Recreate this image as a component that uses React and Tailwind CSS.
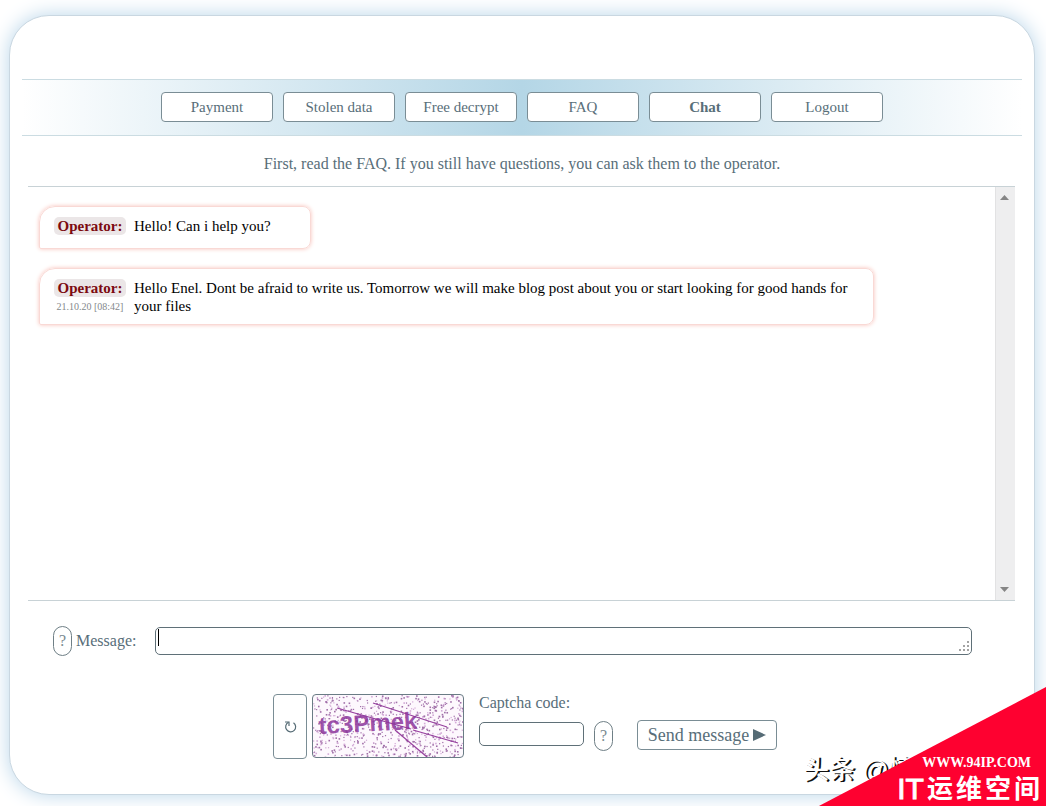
import React, { useState } from 'react';

const navItems = ['Payment', 'Stolen data', 'Free decrypt', 'FAQ', 'Chat', 'Logout'];

const messages = [
  { author: 'Operator', time: '', text: 'Hello! Can i help you?' },
  {
    author: 'Operator',
    time: '21.10.20 [08:42]',
    text: 'Hello Enel. Dont be afraid to write us. Tomorrow we will make blog post about you or start looking for good hands for your files',
  },
];

// Small seeded generator so the captcha noise stays the same between renders
const makeNoise = (count) => {
  let seed = 7;
  const next = () => {
    seed = (seed * 16807) % 2147483647;
    return seed / 2147483647;
  };
  return Array.from({ length: count }, () => ({
    x: next() * 150,
    y: next() * 62,
    size: next() > 0.6 ? 1.6 : 1.2,
    dark: next() > 0.35,
  }));
};

const noise = makeNoise(750);

const HelpButton = ({ label }) => (
  <button
    type="button"
    aria-label={label}
    className="w-[19px] h-[30px] shrink-0 rounded-full border border-[#6f7f86] text-base leading-none text-[#7b8a91] flex items-center justify-center cursor-pointer"
  >
    ?
  </button>
);

const NavBar = ({ active, onSelect }) => (
  <nav className="mx-3 h-[57px] pb-px border-y border-[#cbdce2] bg-linear-to-r from-white via-[#b4d6e6] to-white flex items-center justify-center gap-[10px]">
    {navItems.map((item) => (
      <button
        key={item}
        type="button"
        onClick={() => onSelect(item)}
        className={`w-28 h-[30px] rounded-[4px] border border-[#7a8d95] bg-white text-[15px] cursor-pointer ${
          active === item ? 'font-bold' : ''
        }`}
      >
        {item}
      </button>
    ))}
  </nav>
);

const Message = ({ author, time, text }) => (
  <article className="w-fit min-w-[272px] max-w-[835px] min-h-[43px] rounded-tl-[16px] rounded-r-[8px] rounded-bl-[2px] border border-[#f9d9d5] shadow-[0_0_4px_#f8c2ba] pl-[14px] pr-6 pt-[10px] pb-[9px] flex gap-2 text-[15px] leading-[18px] text-black">
    <div className="shrink-0 w-[72px] flex flex-col items-center">
      <strong className="w-full rounded-[5px] bg-[#ebe6e7] text-center text-[#7c0a10]">{author}:</strong>
      {time && <time className="text-[10px] leading-5 text-[#84898c] whitespace-nowrap -mb-[2px]">{time}</time>}
    </div>
    <p>{text}</p>
  </article>
);

const ScrollTrack = () => (
  <div className="w-5 shrink-0 bg-[#eeeeef] border-l border-[#e2e2e3] pr-[2px] flex flex-col items-center justify-between py-2">
    <svg width="9" height="5" viewBox="0 0 9 5" className="fill-[#858585]">
      <path d="M0 5 4.500 0 9 5Z" />
    </svg>
    <svg width="9" height="5" viewBox="0 0 9 5" className="fill-[#858585]">
      <path d="M0 0 4.500 5 9 0Z" />
    </svg>
  </div>
);

const Captcha = () => (
  <svg viewBox="0 0 150 62" className="w-[152px] h-16 rounded-[4px] border border-[#6a7c85] bg-[#fdf8fd]">
    {noise.map((dot, i) => (
      <rect key={i} x={dot.x} y={dot.y} width={dot.size} height={dot.size} fill={dot.dark ? '#a06fa8' : '#d3aad7'} />
    ))}
    <g stroke="#963f9e" strokeWidth="1.200" fill="none">
      <path d="M24 13 98 34" />
      <path d="M100 35 145 48" />
      <path d="M60 8 134 32" />
      <path d="M82 35 114 62" />
    </g>
    <text x="6" y="39" fontSize="24" fontWeight="bold" fontFamily="Liberation Sans, sans-serif" fill="#8c359b" fillOpacity="0.85" transform="rotate(-3 6 39)">
      tc3Pmek
    </text>
  </svg>
);

const CornerMark = () => (
  <div className="absolute right-0 bottom-0 w-[246px] h-[120px] pointer-events-none">
    <p className="absolute left-[3px] top-[67px] text-[26px] leading-8 font-medium whitespace-nowrap text-white [text-shadow:2px_1px_0_#111] font-['Liberation_Sans','Noto_Sans_CJK_SC',sans-serif]">
      头条 @情
    </p>
    <svg viewBox="0 0 229 120" className="absolute right-0 bottom-0 w-[229px] h-[120px]">
      <path d="M0 120 229 0V120Z" fill="#fe0130" />
    </svg>
    <div className="absolute right-[6px] bottom-0 flex flex-col items-end text-white">
      <span className="mr-[9px] text-[14px] leading-[16px] font-bold font-['Liberation_Serif',serif]">WWW.94IP.COM</span>
      <span className="flex items-center gap-[3px] text-[26px] leading-9 font-bold font-['Liberation_Sans','Noto_Sans_CJK_SC',sans-serif]">
        <span className="text-[30px] font-normal [-webkit-text-stroke:1px_white]">IT</span>
        <span>运</span>
        <span>维</span>
        <span>空</span>
        <span>间</span>
      </span>
    </div>
  </div>
);

const App = () => {
  const [active, setActive] = useState('Chat');
  const [message, setMessage] = useState('');
  const [code, setCode] = useState('');

  return (
    <div className="relative min-h-screen overflow-hidden bg-white pt-[15px] pb-3 pl-[9px] pr-[11px] text-[#586e79] font-['Liberation_Serif',serif]">
      <main className="rounded-[40px] border border-[#c9d7e1] bg-white shadow-[0_0_20px_#b9d5e9] pt-[63px] pb-[35px]">
        <NavBar active={active} onSelect={setActive} />

        <p className="pt-[18px] pb-3 text-center text-base leading-5">
          First, read the FAQ. If you still have questions, you can ask them to the operator.
        </p>

        <section className="ml-[18px] mr-[19px] h-[415px] border-y border-[#c8d2d6] flex">
          <div className="flex-1 min-w-0 pl-[11px] pt-[19px] flex flex-col gap-[19px]">
            {messages.map((item) => (
              <Message key={item.text} {...item} />
            ))}
          </div>
          <ScrollTrack />
        </section>

        <form onSubmit={(e) => e.preventDefault()}>
          <div className="mt-[25px] ml-[43px] mr-[62px] flex items-center">
            <HelpButton label="Message help" />
            <label htmlFor="message" className="ml-1 w-[79px] text-base">
              Message:
            </label>
            <div className="relative flex-1 flex">
              <textarea
                id="message"
                rows={1}
                value={message}
                onChange={(e) => setMessage(e.target.value)}
                className="w-full h-7 resize-none rounded-[5px] border border-[#5f7078] px-1 text-base leading-6 outline-none"
              />
              {message === '' && <span className="absolute left-[3px] top-[2px] w-px h-[17px] bg-black" />}
              <svg width="11" height="11" viewBox="0 0 11 11" className="absolute right-[3px] bottom-[3px] fill-[#a3a3a3]">
                <path d="M9 0h2v2H9zM9 4h2v2H9zM5 4h2v2H5zM9 8h2v2H9zM5 8h2v2H5zM1 8h2v2H1z" />
              </svg>
            </div>
          </div>

          <div className="mt-[38px] pl-[6px] flex justify-center">
            <button
              type="button"
              aria-label="Reload captcha"
              className="w-[34px] h-[65px] rounded-[4px] border border-[#7a8d95] flex items-center justify-center cursor-pointer"
            >
              <svg width="13" height="13" viewBox="0 0 13 13" fill="none" stroke="#566c76" strokeWidth="1.200">
                <path d="M1 2h4v4" />
                <path d="M4.500 2.300A5 5 0 1 0 9.500 2.700" />
              </svg>
            </button>
            <div className="ml-[5px]">
              <Captcha />
            </div>
            <div className="ml-[15px] flex flex-col">
              <label htmlFor="captcha" className="text-base leading-[18px]">
                Captcha code:
              </label>
              <div className="mt-2 flex items-start">
                <input
                  id="captcha"
                  value={code}
                  onChange={(e) => setCode(e.target.value)}
                  className="mt-[2px] w-[105px] h-6 rounded-[5px] border border-[#5f7078] px-1 text-base outline-none"
                />
                <div className="ml-[10px] mt-px">
                  <HelpButton label="Captcha help" />
                </div>
                <button
                  type="submit"
                  className="ml-6 w-[140px] h-[30px] rounded-[4px] border border-[#7a8d95] text-lg leading-none flex items-center justify-center gap-1 cursor-pointer"
                >
                  Send message
                  <svg width="13" height="12" viewBox="0 0 13 12" className="fill-[#566c76]">
                    <path d="M0 0 13 6 0 12Z" />
                  </svg>
                </button>
              </div>
            </div>
          </div>
        </form>
      </main>

      <CornerMark />
    </div>
  );
};

export default App;
